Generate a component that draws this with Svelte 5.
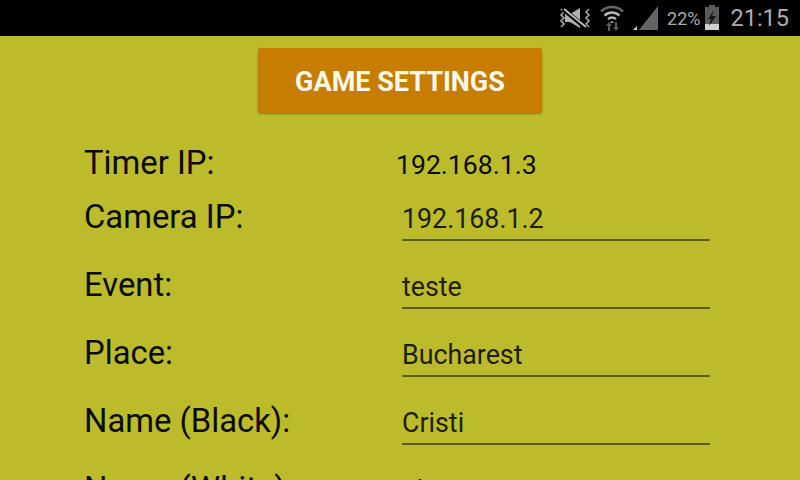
<script lang="ts">
  const fields = [
    { label: 'Camera IP:', value: '192.168.1.2' },
    { label: 'Event:', value: 'teste' },
    { label: 'Place:', value: 'Bucharest' },
    { label: 'Name (Black):', value: 'Cristi' },
    { label: 'Name (White):', value: 'alin' }
  ];
</script>

<div class="screen">
  <header class="status">
    <svg class="ico" width="37" height="24" viewBox="0 0 37 24" fill="none">
      <path d="M5 3l3 3-3 3 3 3-3 3 3 3-3 3M33 3l-3 3 3 3-3 3 3 3-3 3 3 3" stroke="#a8a8a8" stroke-width="1.6"/>
      <path d="M9 8h5l10-6v20l-10-6H9z" fill="#b0b0b0"/>
      <path d="M7 3l23 19" stroke="#000" stroke-width="4.5"/>
      <path d="M8 3l22 18" stroke="#b8b8b8" stroke-width="2"/>
    </svg>
    <svg class="ico wifi" width="24" height="28" viewBox="0 0 24 28" fill="none">
      <path d="M1 7.500C7 1.500 17 1.500 23 7.500" stroke="#666" stroke-width="2.600"/>
      <path d="M4.500 11.500c4.500-4 10.500-4 15 0" stroke="#b8b8b8" stroke-width="2.400"/>
      <path d="M8 15c2.500-2 5.500-2 8 0" stroke="#b8b8b8" stroke-width="2.400"/>
      <path d="M12 17l-2 2h4z" fill="#b8b8b8"/>
      <path d="M6 22l3-4 3 4h-2v5H8v-5zM13 23h2v-5h2v5h2l-3 4z" fill="#5c5c5c"/>
    </svg>
    <svg class="ico signal" width="26" height="26" viewBox="0 0 26 26">
      <path d="M25 1v24H6z" fill="#636363"/>
      <path d="M0 25l4-4v4z" fill="#cfcfcf"/>
    </svg>
    <span class="pct">22%</span>
    <svg class="ico batt" width="16" height="26" viewBox="0 0 16 26">
      <path d="M5 0h6v2h4v23H1V2h4z" fill="#5a5a5a"/>
      <path d="M1 19h14v6H1z" fill="#cfcfcf"/>
      <path d="M10 5L4 14h3l-2 7 7-10H8z" fill="#161616"/>
    </svg>
    <span class="clock">21:15</span>
  </header>

  <main class="page">
    <button class="settings">Game Settings</button>

    <div class="timer">
      <span class="label">Timer IP:</span>
      <span class="ip">192.168.1.3</span>
    </div>

    {#each fields as f}
      <div class="row">
        <span class="label">{f.label}</span>
        <span class="field">{f.value}</span>
      </div>
    {/each}
  </main>
</div>

<style>
  :global(body) {
    background: #000;
  }

  .screen {
    width: 800px;
    height: 480px;
    overflow: hidden;
    background: #bcbb2b;
    font-family: Roboto, sans-serif;
    color: #0b0b05;
  }

  .status {
    height: 36px;
    background: #000;
    display: flex;
    align-items: center;
    justify-content: flex-end;
    padding-right: 11px;
    color: #adadad;
  }

  .ico { flex: none; }
  .wifi { margin-left: 7px; }
  .signal { margin-left: 9px; }

  .pct {
    font-size: 18px;
    margin-left: 8px;
  }

  .batt { margin-left: 4px; margin-right: 10px; }

  .clock {
    font-size: 23.500px;
  }

  .page {
    display: flex;
    flex-direction: column;
    padding-top: 12px;
  }

  .settings {
    align-self: center;
    width: 284px;
    height: 65px;
    padding: 2px 0 0;
    border: 0;
    border-radius: 3px;
    background: #c77e00;
    box-shadow: 0 1px 2px rgba(60, 50, 0, 0.45);
    color: #fff8ea;
    font: 700 27px Roboto, sans-serif;
    text-transform: uppercase;
  }

  .label {
    font-size: 32.800px;
    line-height: 38px;
  }

  .timer,
  .row {
    display: grid;
    grid-template-columns: 318px 308px;
    margin-left: 84px;
  }

  .timer {
    margin-top: 31px;
    height: 38px;
  }

  .ip {
    font-size: 26.600px;
    line-height: 42px;
    margin-left: -6px;
  }

  .row {
    height: 68px;
  }

  .timer + .row {
    margin-top: 16px;
  }

  .field {
    font-size: 26.800px;
    line-height: 42px;
    height: 41px;
    border-bottom: 2px solid #5c5b14;
    color: #1e1e0a;
    align-self: start;
  }
</style>
